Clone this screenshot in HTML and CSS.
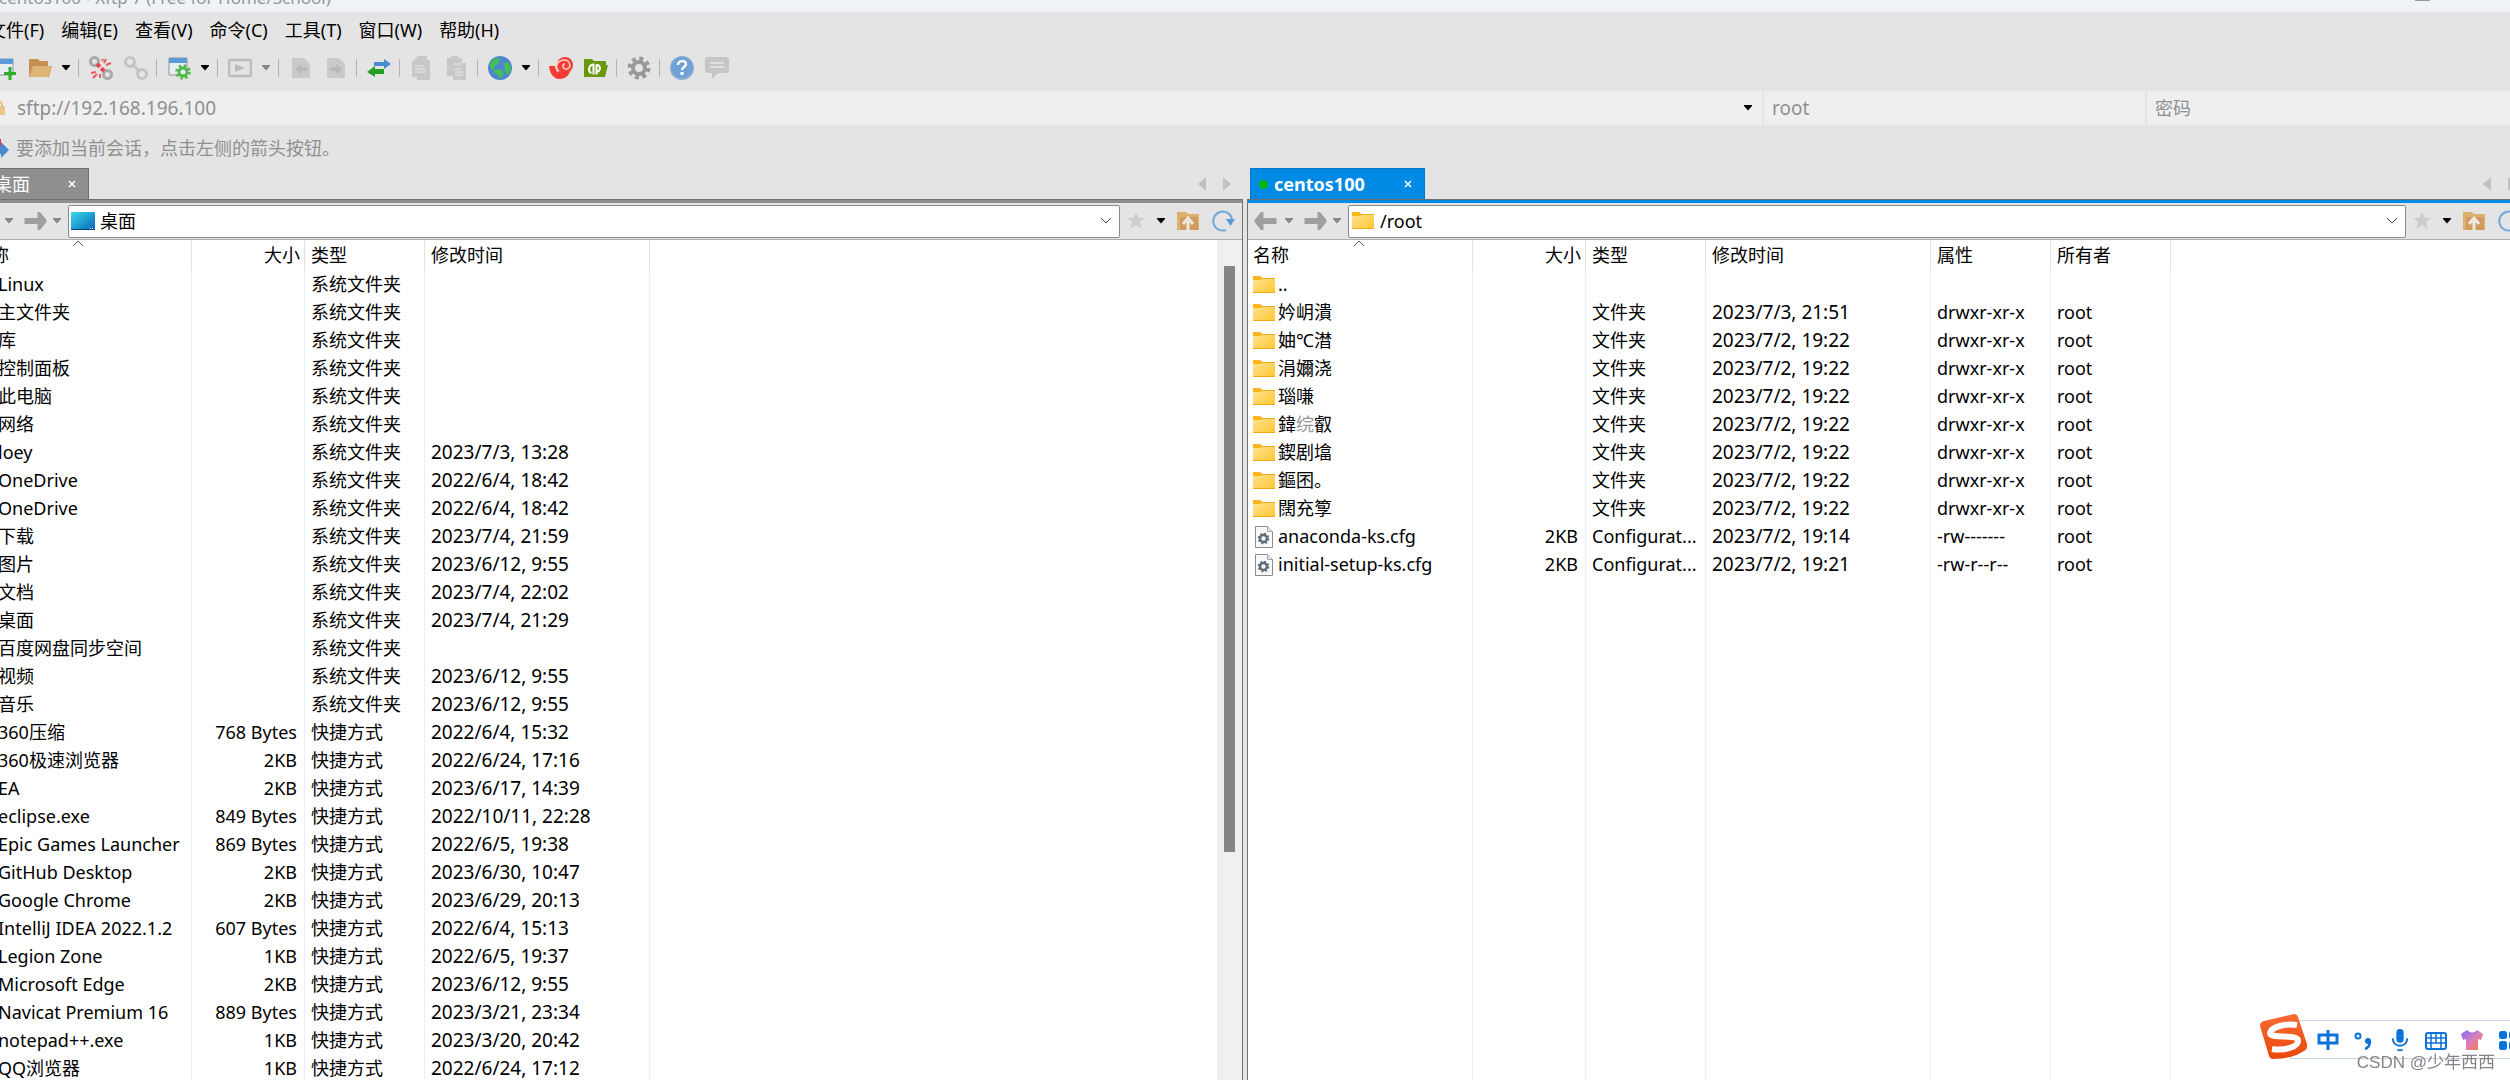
FILE: index.html
```html
<!DOCTYPE html>
<html lang="zh-CN">
<head>
<meta charset="utf-8">
<title>centos100 - Xftp 7</title>
<link rel="stylesheet" href="styles.css">
</head>
<body>
<svg class="defs" aria-hidden="true">
  <defs>
    <linearGradient id="g-folder" x1="0" y1="0" x2="1" y2="1"><stop offset="0" stop-color="#ffe494"/><stop offset="1" stop-color="#ffc630"/></linearGradient>
    <linearGradient id="g-desk" x1="0" y1="0" x2="1" y2="1"><stop offset="0" stop-color="#35dbe8"/><stop offset="1" stop-color="#0a63bd"/></linearGradient>
    <linearGradient id="g-shirt" x1="0" y1="0" x2="1" y2="1"><stop offset="0" stop-color="#7b6cff"/><stop offset=".5" stop-color="#d97fb8"/><stop offset="1" stop-color="#ff7a3c"/></linearGradient>
    <linearGradient id="g-sogou" x1="0" y1="0" x2="0" y2="1"><stop offset="0" stop-color="#fa6b35"/><stop offset="1" stop-color="#ea4708"/></linearGradient>
    <symbol id="i-folder" viewBox="0 0 22 18"><path d="M0 2h22v15H0z" fill="url(#g-folder)"/><path d="M0 0h7l2 1.500V3L7 4H0z" fill="#fbb714"/><path d="M8 2.500h14M0 16.500h22" stroke="#efa91c" fill="none"/></symbol>
    <symbol id="i-cfg" viewBox="0 0 18 22"><path d="M.5.5h12l5 5v16H.5z" fill="#f8f8f8" stroke="#8c8c8c"/><path d="M12.500.5v5h5" fill="#e6e6e6" stroke="#a5a5a5"/><circle cx="8.500" cy="12.500" r="3.500" fill="none" stroke="#5d6c76" stroke-width="2.500"/><circle cx="8.500" cy="12.500" r="5" fill="none" stroke="#5d6c76" stroke-width="1.500" stroke-dasharray="2 1.930"/></symbol>
    <symbol id="i-desk" viewBox="0 0 24 18"><rect width="24" height="18" rx="1" fill="url(#g-desk)"/><path d="M0 17.500h24" stroke="#0c3f7c"/><path d="M19 16.500h4" stroke="#fff" stroke-dasharray="1 1"/></symbol>
    <symbol id="i-caret" viewBox="0 0 8 6"><path d="M0 0h8v1L4 5.500 0 1z" fill="currentColor"/></symbol>
    <symbol id="i-left" viewBox="0 0 22 18"><path d="M9 0H6.500L0 8v2l6.500 8H9v-6h13V6H9z" fill="#9f9f9f"/></symbol>
    <symbol id="i-right" viewBox="0 0 22 18"><path d="M13 0h2.500L22 8v2l-6.500 8H13v-6H0V6h13z" fill="#9f9f9f"/></symbol>
    <symbol id="i-down" viewBox="0 0 12 8"><path d="M1 1l5 5 5-5" fill="none" stroke="#444"/></symbol>
    <symbol id="i-sort" viewBox="0 0 12 8"><path d="M1 6l5-5 5 5" fill="none" stroke="#555"/></symbol>
    <symbol id="i-star" viewBox="0 0 20 20"><path d="M10 0l3 6.500h7l-5.500 4.500 2 8-6.500-4.500L3.500 19l2-8L0 6.500h7z" fill="#cdcdcd" stroke="#ececec" stroke-width=".6"/></symbol>
    <symbol id="i-up" viewBox="0 0 22 20"><path d="M0 1h9l2 2h11v16H0z" fill="#dcb06d"/><path d="M3 6h18v13H3z" fill="#d09b60"/><path d="M11 21v-11M6 13l5-6 5 6" fill="none" stroke="#efe9e2" stroke-width="3"/></symbol>
    <symbol id="i-refresh" viewBox="0 0 24 22"><path d="M20 9A9.500 9.500 0 1 0 14 20" fill="none" stroke="#6fa9db" stroke-width="2"/><path d="M14 9h9l-4.500 7z" fill="#5c9bd6"/></symbol>
    <symbol id="i-close" viewBox="0 0 8 8"><path d="M1 1l6 6M7 1L1 7" stroke="#fff" stroke-width="1.500"/></symbol>
    <symbol id="i-tri" viewBox="0 0 8 14"><path d="M8 0v14L0 7z" fill="#c1c1c1"/></symbol>
    <symbol id="i-new" viewBox="0 0 24 24"><path d="M3 3h17v16H3z" fill="#e9eef2" stroke="#8c969e"/><path d="M3 3h17v5H3z" fill="#5b9bd8"/><path d="M17 11v13M11 17.500h12" stroke="#2dae2a" stroke-width="3"/></symbol>
    <symbol id="i-open" viewBox="0 0 24 24"><path d="M1 3h9l2 2h8v5h4l-3 11H1z" fill="#c98f51"/><path d="M5 10h19l-4 11H1z" fill="#deb577"/></symbol>
    <symbol id="i-chain" viewBox="0 0 24 24"><circle cx="6" cy="6" r="4.500"/><path d="M8 8l8 8"/><circle cx="18" cy="18" r="4.500"/></symbol>
    <symbol id="i-break" viewBox="0 0 24 24"><g fill="none" stroke="#a9a9a9" stroke-width="3"><circle cx="5.500" cy="5.500" r="4"/><circle cx="18.500" cy="18.500" r="4"/></g><path d="M8 8l8 8" stroke="#e84550" stroke-width="4" stroke-dasharray="4 2"/><path d="M15 7l2-4M17 9l5-2M13 5l1-2M7 16l-5 1M8 18l-4 4M11 18v4" stroke="#ea5a62" stroke-width="2"/></symbol>
    <symbol id="i-prop" viewBox="0 0 24 24"><path d="M2 2h18v17H2z" fill="#e9eef2" stroke="#8c969e"/><path d="M2 2h18v5H2z" fill="#5b9bd8"/><circle cx="16" cy="16" r="4" fill="none" stroke="#53b84b" stroke-width="3"/><circle cx="16" cy="16" r="6.500" fill="none" stroke="#53b84b" stroke-width="2.500" stroke-dasharray="2.500 2.600"/></symbol>
    <symbol id="i-play" viewBox="0 0 24 24"><rect x="1" y="4" width="22" height="16" rx="1" fill="none" stroke="#bdbdbd" stroke-width="2.500"/><path d="M7 8l10 4-10 4z" fill="#bdbdbd"/></symbol>
    <symbol id="i-docl" viewBox="0 0 24 24"><path d="M3 2h12l6 6v14H3z" fill="#cacaca"/><path d="M6 13l6-5v3h6v4h-6v3z" fill="#b9b9b9"/></symbol>
    <symbol id="i-docr" viewBox="0 0 24 24"><path d="M3 2h12l6 6v14H3z" fill="#cacaca"/><path d="M18 13l-6-5v3H6v4h6v3z" fill="#b9b9b9"/></symbol>
    <symbol id="i-swap" viewBox="0 0 24 24"><path d="M7 6h10V3l7 5-7 5v-3H7z" fill="#4a8bce"/><path d="M17 13H8v-3l-8 6 8 5v-3h9z" fill="#23a021"/></symbol>
    <symbol id="i-copy" viewBox="0 0 24 24"><path d="M8 0h9v4h3v20H7v-3H2V6z" fill="#c8c8c8"/><path d="M5 10h8M5 13h11M5 16h11" stroke="#dedede" stroke-width="1.500"/></symbol>
    <symbol id="i-paste" viewBox="0 0 24 24"><path d="M2 2h4V0h7v2h4v5h4v17H8v-4H2z" fill="#c8c8c8"/><path d="M8 8h8M10 13h6M10 16h8M10 19h8" stroke="#dedede" stroke-width="1.500"/></symbol>
    <symbol id="i-globe" viewBox="0 0 24 24"><circle cx="12" cy="12" r="12" fill="#4b87cf"/><path d="M2 7l5-5 5 1-2 5-4 3 1 4-5-3zM9 13l5 1 2 4-4 5-2-4-5-3zM16 6l5 1 2 5-1 5-3 2-2-5-1-4z" fill="#46bd52"/></symbol>
    <symbol id="i-swirl" viewBox="0 0 24 24"><path d="M0 10h6c0 5 6 7 10 4 5 5 6-1 6-1-2 7-6 10-12 10C5 23 1 18 0 10z" fill="#f33b32"/><circle cx="16" cy="9" r="8" fill="#f33b32"/><path d="M9 16c-4-5 0-12 6-12 6 0 8 7 3 9-4 1-6-5-2-5" fill="none" stroke="#ffd0cb" stroke-width="1.500"/></symbol>
    <symbol id="i-pf" viewBox="0 0 24 24"><path d="M0 3h8l2 2h12v4h2l-3 12H0z" fill="#6a980c"/><path d="M9.500 18.500V8.500C4 9 4 16 7.500 17M12.500 8.500v10M12.500 9c4-1 5 7 0 7" fill="none" stroke="#fff" stroke-width="2"/></symbol>
    <symbol id="i-gear" viewBox="0 0 24 24"><circle cx="12" cy="12" r="6" fill="none" stroke="#999" stroke-width="4"/><circle cx="12" cy="12" r="9.500" fill="none" stroke="#999" stroke-width="4" stroke-dasharray="4 3.460"/></symbol>
    <symbol id="i-help" viewBox="0 0 24 24"><circle cx="12" cy="12" r="12" fill="#8cabcf"/><circle cx="12" cy="11.500" r="10.500" fill="#6ea1d8"/><path d="M8 9c0-5 8-5 8-1 0 3-4 3-4 6" fill="none" stroke="#fff" stroke-width="2.500"/><path d="M10.500 16h3v3h-3z" fill="#fff"/></symbol>
    <symbol id="i-chat" viewBox="0 0 24 24"><path d="M2 1h20l2 2v12l-2 2H13l-6 6v-6H2l-2-2V3z" fill="#c6c6c6"/><path d="M5 7h14M5 11h14" stroke="#e0e0e0" stroke-width="2"/></symbol>
  </defs>
</svg>

<div class="window">
  <header class="titlebar"><span>centos100 - Xftp 7 (Free for Home/School)</span><i class="maximize"></i></header>

  <nav class="menu">
    <button>文件(F)</button><button>编辑(E)</button><button>查看(V)</button><button>命令(C)</button><button>工具(T)</button><button>窗口(W)</button><button>帮助(H)</button>
  </nav>

  <div class="toolbar">
    <button class="tool" aria-label="新建"><svg><use href="#i-new"/></svg></button>
    <button class="tool" aria-label="打开"><svg><use href="#i-open"/></svg></button>
    <button class="more" aria-label="更多"><svg><use href="#i-caret"/></svg></button>
    <i class="sep"></i>
    <button class="tool" aria-label="断开"><svg><use href="#i-break"/></svg></button>
    <button class="tool chain" aria-label="重新连接"><svg><use href="#i-chain"/></svg></button>
    <i class="sep"></i>
    <button class="tool" aria-label="属性"><svg><use href="#i-prop"/></svg></button>
    <button class="more" aria-label="更多"><svg><use href="#i-caret"/></svg></button>
    <i class="sep"></i>
    <button class="tool" aria-label="运行"><svg><use href="#i-play"/></svg></button>
    <button class="more dim" aria-label="更多"><svg><use href="#i-caret"/></svg></button>
    <i class="sep"></i>
    <button class="tool" aria-label="传输到左侧"><svg><use href="#i-docl"/></svg></button>
    <button class="tool" aria-label="传输到右侧"><svg><use href="#i-docr"/></svg></button>
    <i class="sep"></i>
    <button class="tool" aria-label="同步"><svg><use href="#i-swap"/></svg></button>
    <i class="sep"></i>
    <button class="tool" aria-label="复制"><svg><use href="#i-copy"/></svg></button>
    <button class="tool" aria-label="粘贴"><svg><use href="#i-paste"/></svg></button>
    <i class="sep"></i>
    <button class="tool" aria-label="语言"><svg><use href="#i-globe"/></svg></button>
    <button class="more" aria-label="更多"><svg><use href="#i-caret"/></svg></button>
    <i class="sep"></i>
    <button class="tool" aria-label="Xshell"><svg><use href="#i-swirl"/></svg></button>
    <button class="tool" aria-label="文件夹"><svg><use href="#i-pf"/></svg></button>
    <i class="sep"></i>
    <button class="tool" aria-label="选项"><svg><use href="#i-gear"/></svg></button>
    <i class="sep"></i>
    <button class="tool" aria-label="帮助"><svg><use href="#i-help"/></svg></button>
    <button class="tool" aria-label="反馈"><svg><use href="#i-chat"/></svg></button>
  </div>

  <form class="address">
    <div class="host">
      <svg class="lock" viewBox="0 0 14 14"><path d="M3 6V4a4 4 0 0 1 8 0v2" fill="none" stroke="#e8bd84" stroke-width="2"/><path d="M0 5h14v9H0z" fill="#ecc48e"/><path d="M7 8v3" stroke="#f7e4c8" stroke-width="2"/></svg>
      <input aria-label="主机" value="sftp://192.168.196.100">
      <button type="button" class="more" aria-label="历史"><svg><use href="#i-caret"/></svg></button>
    </div>
    <input class="user" aria-label="用户名" value="root">
    <input class="pass" aria-label="密码" placeholder="密码">
  </form>

  <div class="hint">
    <svg viewBox="0 0 20 20"><path d="M4 1h8v10H4z" fill="#e23b3b"/><path d="M6 8h6V4l8 8-8 8v-4H6z" fill="#4a8bd0"/></svg>
    要添加当前会话，点击左侧的箭头按钮。
  </div>

  <main class="panes">
    <section class="pane local">
      <div class="tabs">
        <div class="tab"><span>桌面</span><button aria-label="关闭"><svg><use href="#i-close"/></svg></button></div>
        <div class="pager"><svg><use href="#i-tri"/></svg><svg class="flip"><use href="#i-tri"/></svg></div>
      </div>
      <div class="body">
        <div class="nav">
          <button class="go" aria-label="后退"><svg><use href="#i-left"/></svg></button>
          <button class="more dim" aria-label="更多"><svg><use href="#i-caret"/></svg></button>
          <button class="go" aria-label="前进"><svg><use href="#i-right"/></svg></button>
          <button class="more dim" aria-label="更多"><svg><use href="#i-caret"/></svg></button>
          <label class="path"><svg class="place"><use href="#i-desk"/></svg><input aria-label="本地路径" value="桌面"><svg class="drop"><use href="#i-down"/></svg></label>
          <button class="act star" aria-label="书签"><svg><use href="#i-star"/></svg></button>
          <button class="more" aria-label="更多"><svg><use href="#i-caret"/></svg></button>
          <button class="act up" aria-label="上级"><svg><use href="#i-up"/></svg></button>
          <button class="act" aria-label="刷新"><svg><use href="#i-refresh"/></svg></button>
        </div>
        <div class="list">
          <table>
            <colgroup><col class="c-name"><col class="c-size"><col class="c-type"><col class="c-date"><col></colgroup>
            <thead><tr><th>名称<svg class="sort"><use href="#i-sort"/></svg></th><th>大小</th><th>类型</th><th>修改时间</th><th></th></tr></thead>
            <tbody>
              <tr><td>Linux</td><td></td><td>系统文件夹</td><td></td><td></td></tr>
              <tr><td>主文件夹</td><td></td><td>系统文件夹</td><td></td><td></td></tr>
              <tr><td>库</td><td></td><td>系统文件夹</td><td></td><td></td></tr>
              <tr><td>控制面板</td><td></td><td>系统文件夹</td><td></td><td></td></tr>
              <tr><td>此电脑</td><td></td><td>系统文件夹</td><td></td><td></td></tr>
              <tr><td>网络</td><td></td><td>系统文件夹</td><td></td><td></td></tr>
              <tr><td>loey</td><td></td><td>系统文件夹</td><td>2023/7/3, 13:28</td><td></td></tr>
              <tr><td>OneDrive</td><td></td><td>系统文件夹</td><td>2022/6/4, 18:42</td><td></td></tr>
              <tr><td>OneDrive</td><td></td><td>系统文件夹</td><td>2022/6/4, 18:42</td><td></td></tr>
              <tr><td>下载</td><td></td><td>系统文件夹</td><td>2023/7/4, 21:59</td><td></td></tr>
              <tr><td>图片</td><td></td><td>系统文件夹</td><td>2023/6/12, 9:55</td><td></td></tr>
              <tr><td>文档</td><td></td><td>系统文件夹</td><td>2023/7/4, 22:02</td><td></td></tr>
              <tr><td>桌面</td><td></td><td>系统文件夹</td><td>2023/7/4, 21:29</td><td></td></tr>
              <tr><td>百度网盘同步空间</td><td></td><td>系统文件夹</td><td></td><td></td></tr>
              <tr><td>视频</td><td></td><td>系统文件夹</td><td>2023/6/12, 9:55</td><td></td></tr>
              <tr><td>音乐</td><td></td><td>系统文件夹</td><td>2023/6/12, 9:55</td><td></td></tr>
              <tr><td>360压缩</td><td>768 Bytes</td><td>快捷方式</td><td>2022/6/4, 15:32</td><td></td></tr>
              <tr><td>360极速浏览器</td><td>2KB</td><td>快捷方式</td><td>2022/6/24, 17:16</td><td></td></tr>
              <tr><td>EA</td><td>2KB</td><td>快捷方式</td><td>2023/6/17, 14:39</td><td></td></tr>
              <tr><td>eclipse.exe</td><td>849 Bytes</td><td>快捷方式</td><td>2022/10/11, 22:28</td><td></td></tr>
              <tr><td>Epic Games Launcher</td><td>869 Bytes</td><td>快捷方式</td><td>2022/6/5, 19:38</td><td></td></tr>
              <tr><td>GitHub Desktop</td><td>2KB</td><td>快捷方式</td><td>2023/6/30, 10:47</td><td></td></tr>
              <tr><td>Google Chrome</td><td>2KB</td><td>快捷方式</td><td>2023/6/29, 20:13</td><td></td></tr>
              <tr><td>IntelliJ IDEA 2022.1.2</td><td>607 Bytes</td><td>快捷方式</td><td>2022/6/4, 15:13</td><td></td></tr>
              <tr><td>Legion Zone</td><td>1KB</td><td>快捷方式</td><td>2022/6/5, 19:37</td><td></td></tr>
              <tr><td>Microsoft Edge</td><td>2KB</td><td>快捷方式</td><td>2023/6/12, 9:55</td><td></td></tr>
              <tr><td>Navicat Premium 16</td><td>889 Bytes</td><td>快捷方式</td><td>2023/3/21, 23:34</td><td></td></tr>
              <tr><td>notepad++.exe</td><td>1KB</td><td>快捷方式</td><td>2023/3/20, 20:42</td><td></td></tr>
              <tr><td>QQ浏览器</td><td>1KB</td><td>快捷方式</td><td>2022/6/24, 17:12</td><td></td></tr>
            </tbody>
          </table>
          <div class="scroll"><div class="thumb"></div></div>
        </div>
      </div>
    </section>

    <section class="pane remote">
      <div class="tabs">
        <div class="tab"><i class="dot"></i><span>centos100</span><button aria-label="关闭"><svg><use href="#i-close"/></svg></button></div>
        <div class="pager"><svg><use href="#i-tri"/></svg><svg class="flip"><use href="#i-tri"/></svg></div>
      </div>
      <div class="body">
        <div class="nav">
          <button class="go" aria-label="后退"><svg><use href="#i-left"/></svg></button>
          <button class="more dim" aria-label="更多"><svg><use href="#i-caret"/></svg></button>
          <button class="go" aria-label="前进"><svg><use href="#i-right"/></svg></button>
          <button class="more dim" aria-label="更多"><svg><use href="#i-caret"/></svg></button>
          <label class="path"><svg class="place"><use href="#i-folder"/></svg><input aria-label="远程路径" value="/root"><svg class="drop"><use href="#i-down"/></svg></label>
          <button class="act star" aria-label="书签"><svg><use href="#i-star"/></svg></button>
          <button class="more" aria-label="更多"><svg><use href="#i-caret"/></svg></button>
          <button class="act up" aria-label="上级"><svg><use href="#i-up"/></svg></button>
          <button class="act" aria-label="刷新"><svg><use href="#i-refresh"/></svg></button>
        </div>
        <div class="list">
          <table>
            <colgroup><col class="c-name"><col class="c-size"><col class="c-type"><col class="c-date"><col class="c-type"><col class="c-type"><col></colgroup>
            <thead><tr><th>名称<svg class="sort"><use href="#i-sort"/></svg></th><th>大小</th><th>类型</th><th>修改时间</th><th>属性</th><th>所有者</th><th></th></tr></thead>
            <tbody>
              <tr><td><svg class="file"><use href="#i-folder"/></svg>..</td><td></td><td></td><td></td><td></td><td></td><td></td></tr>
              <tr><td><svg class="file"><use href="#i-folder"/></svg>妗岄潰</td><td></td><td>文件夹</td><td>2023/7/3, 21:51</td><td>drwxr-xr-x</td><td>root</td><td></td></tr>
              <tr><td><svg class="file"><use href="#i-folder"/></svg>妯℃澘</td><td></td><td>文件夹</td><td>2023/7/2, 19:22</td><td>drwxr-xr-x</td><td>root</td><td></td></tr>
              <tr><td><svg class="file"><use href="#i-folder"/></svg>涓嬭浇</td><td></td><td>文件夹</td><td>2023/7/2, 19:22</td><td>drwxr-xr-x</td><td>root</td><td></td></tr>
              <tr><td><svg class="file"><use href="#i-folder"/></svg>瑙嗛</td><td></td><td>文件夹</td><td>2023/7/2, 19:22</td><td>drwxr-xr-x</td><td>root</td><td></td></tr>
              <tr><td><svg class="file"><use href="#i-folder"/></svg>鍏<span class="faint">𬘫</span>叡</td><td></td><td>文件夹</td><td>2023/7/2, 19:22</td><td>drwxr-xr-x</td><td>root</td><td></td></tr>
              <tr><td><svg class="file"><use href="#i-folder"/></svg>鍥剧墖</td><td></td><td>文件夹</td><td>2023/7/2, 19:22</td><td>drwxr-xr-x</td><td>root</td><td></td></tr>
              <tr><td><svg class="file"><use href="#i-folder"/></svg>鏂囨。</td><td></td><td>文件夹</td><td>2023/7/2, 19:22</td><td>drwxr-xr-x</td><td>root</td><td></td></tr>
              <tr><td><svg class="file"><use href="#i-folder"/></svg>闊充箰</td><td></td><td>文件夹</td><td>2023/7/2, 19:22</td><td>drwxr-xr-x</td><td>root</td><td></td></tr>
              <tr><td><svg class="file"><use href="#i-cfg"/></svg>anaconda-ks.cfg</td><td>2KB</td><td>Configurat...</td><td>2023/7/2, 19:14</td><td>-rw-------</td><td>root</td><td></td></tr>
              <tr><td><svg class="file"><use href="#i-cfg"/></svg>initial-setup-ks.cfg</td><td>2KB</td><td>Configurat...</td><td>2023/7/2, 19:21</td><td>-rw-r--r--</td><td>root</td><td></td></tr>
              <tr class="rest"><td></td><td></td><td></td><td></td><td></td><td></td><td></td></tr>
            </tbody>
          </table>
        </div>
      </div>
    </section>
  </main>
</div>

<aside class="ime">
  <div class="ime-bar">
    <svg viewBox="0 0 22 22"><path d="M2 6h18v8H2zM11 1v20" fill="none" stroke="#0b72da" stroke-width="3"/></svg>
    <svg viewBox="0 0 22 22"><circle cx="5" cy="7" r="2.500" fill="none" stroke="#0b72da" stroke-width="2"/><circle cx="15" cy="12" r="3" fill="#0b72da"/><path d="M17 12q0 6-5 8" fill="none" stroke="#0b72da" stroke-width="2.500"/></svg>
    <svg viewBox="0 0 22 24"><rect x="7" y="0" width="8" height="15" rx="4" fill="#0b72da"/><path d="M3 10c0 11 16 11 16 0M8 23h6" fill="none" stroke="#0b72da" stroke-width="2"/></svg>
    <svg viewBox="0 0 22 22"><rect x="1" y="4" width="20" height="16" rx="2" fill="none" stroke="#0b72da" stroke-width="2"/><path d="M1 9h20M1 14h20M6 4v16M11 4v10M16 4v16" stroke="#0b72da" stroke-width="1.500"/></svg>
    <svg viewBox="0 0 22 22"><path d="M6 1q5 5 10 0l6 4-2 6-3-1v11H5V10l-3 1-2-6z" fill="url(#g-shirt)"/></svg>
    <svg viewBox="0 0 22 22"><rect x="2" y="2" width="8" height="8" rx="2.500" fill="#0b72da"/><rect x="2" y="12" width="8" height="9" rx="2.500" fill="#0b72da"/><rect x="12" y="2" width="8" height="8" rx="2.500" fill="#0b72da"/><rect x="12" y="12" width="8" height="9" rx="2.500" fill="#0b72da"/></svg>
  </div>
  <svg class="sogou" viewBox="0 0 48 46"><path d="M4 7L34 0q3 0 4 3l9 27q1 5-3 7-12 8-31 8-3 0-4-3L0 12q0-4 4-5z" fill="url(#g-sogou)"/><path d="M37 11C26 9 11 13 10 19c0 6 26 1 28 7 1 7-14 11-26 9" fill="none" stroke="#fff" stroke-width="6"/></svg>
  <p class="mark">CSDN @少年西西</p>
</aside>
</body>
</html>
```
FILE: styles.css
```css
* { box-sizing: border-box; }
body {
  margin: 0;
  overflow: hidden;
  background: #e4e4e4;
  color: #000;
  font: 18px/28px "Noto Sans", "Noto Sans CJK SC", sans-serif;
}
button, input {
  margin: 0;
  padding: 0;
  border: 0;
  background: none;
  color: inherit;
  font: inherit;
  outline: 0;
}
input { min-width: 0; }
svg { display: block; flex: none; }
.defs { position: absolute; width: 0; height: 0; }

/* The window is wider than the screen on both sides */
.window {
  display: flex;
  flex-direction: column;
  height: 100vh;
  margin: 0 -18px 0 -33px;
}
.titlebar {
  display: flex;
  justify-content: space-between;
  align-items: flex-end;
  flex: none;
  height: 12px;
  padding: 0 98px 0 32px;
  overflow: hidden;
  background: #eff3f7;
  color: #969696;
  font-size: 17px;
}
.maximize { align-self: flex-start; width: 15px; height: 1px; background: #999; }

.menu { display: flex; flex: none; gap: 17px; height: 36px; padding-left: 21px; align-items: center; }

.toolbar { display: flex; flex: none; align-items: center; height: 43px; padding: 0 0 3px 20px; }
.tool, .more, .go, .act { display: flex; flex: none; align-items: center; justify-content: center; }
.tool { width: 35px; }
.tool svg { width: 24px; height: 24px; }
.chain { fill: none; stroke: #c4c4c4; stroke-width: 3px; }
.more { width: 18px; color: #000; }
.more svg { width: 8px; height: 6px; }
.dim { color: #868686; }
.sep { width: 8px; height: 18px; background: linear-gradient(#b4b4b4, #b4b4b4) 3px 0 / 1px 100% no-repeat; }

.address { display: flex; flex: none; gap: 2px; height: 34px; color: #909090; font-size: 19px; }
.address input::placeholder { color: #909090; font-size: 18px; opacity: 1; }
.host { display: flex; flex: 1; align-items: center; padding: 0 5px 0 24px; background: #efefef; }
.host input { flex: 1; padding-left: 12px; }
.lock { width: 14px; height: 14px; }
.user, .pass { width: 381px; padding-left: 8px; background: #efefef; }

.hint { display: flex; flex: none; align-items: center; gap: 7px; height: 43px; padding: 2px 0 0 22px; color: #909090; }
.hint svg { width: 20px; height: 20px; }

.panes { display: grid; grid-template-columns: 1276fr 1281fr; gap: 4px; flex: 1; min-height: 0; }
.pane { display: flex; flex-direction: column; min-width: 0; min-height: 0; }
.tabs { display: flex; flex: none; justify-content: space-between; height: 31px; padding-left: 3px; }
.tab { display: flex; align-items: center; padding: 0 12px 0 8px; border: solid #707070; border-width: 1px 1px 0; background: #8f8f8f; color: #fff; }
.tab button { width: 8px; }
.tab svg { width: 8px; height: 8px; }
.local .tab { width: 119px; justify-content: space-between; padding-left: 23px; }
.remote .tab { width: 175px; border-color: #0078c8; background: #008ae4; font-weight: 700; }
.remote .tab button { margin-left: auto; }
.dot { width: 9px; height: 9px; margin-right: 6px; border-radius: 50%; background: #00b80c; }
.pager { display: flex; align-items: center; gap: 17px; padding-right: 12px; }
.pager svg { width: 8px; height: 14px; }
.flip { transform: rotate(180deg); }
.body { display: flex; flex: 1; flex-direction: column; min-height: 0; border-top: 1px solid #707070; }
.local .body { border-right: 1px solid #707070; }
.remote .body { border-left: 1px solid #707070; }

.nav { display: flex; flex: none; align-items: center; height: 40px; padding: 0 0 0 5px; border-top: 3px solid #8f8f8f; border-bottom: 1px solid #adadad; }
.local .nav { padding-left: 6px; }
.remote .nav { border-top-color: #008ae4; }
.go { width: 24px; }
.go svg { width: 23px; height: 18px; }
.nav .dim { width: 24px; color: #868686; }
.nav .dim + .go { margin-left: 2px; }
.go + .dim + .go + .dim { width: 20px; margin-right: 1px; }
.path { display: flex; flex: 1; align-items: center; height: 33px; min-width: 0; padding: 0 7px 0 2px; border: 1px solid #8a8a8a; border-radius: 2px; background: #fff; }
.path input { flex: 1; padding-left: 5px; }
.place { width: 24px; height: 18px; }
.drop { width: 12px; height: 8px; }
.act { width: 36px; }
.act svg { width: 24px; height: 22px; }
.star svg { width: 20px; height: 20px; }
.up svg { width: 22px; height: 20px; }
.nav .star { width: 32px; }

.list { display: flex; flex: 1; min-height: 0; overflow: hidden; background: #fff; }
table { flex: 1; height: 100%; table-layout: fixed; border-collapse: separate; border-spacing: 0; }
.c-name { width: 225px; }
.c-size { width: 113px; }
.c-type { width: 120px; }
.c-date { width: 225px; }
th, td { height: 28px; padding: 0 0 0 6px; border-right: 1px solid #e5f0fb; font-weight: 400; line-height: 28px; text-align: left; white-space: nowrap; }
th { position: relative; height: 30px; border-color: #e0e0e0; line-height: 30px; }
td:last-child, th:last-child { border: 0; }
td:nth-child(2) { padding-right: 7px; text-align: right; }
th:nth-child(2) { padding-right: 4px; text-align: right; }
td:nth-child(4) { font-size: 19px; }
.local td:first-child { padding-left: 31px; }
.remote td:first-child, .remote th:first-child { padding-left: 5px; }
.rest td { height: auto; }
.sort { position: absolute; top: 0; left: 47%; width: 12px; height: 8px; }
.file { display: inline-block; width: 22px; height: 22px; margin-right: 3px; vertical-align: -5px; }
.faint { color: #999; }

.scroll { flex: none; width: 25px; padding: 26px 7px 0; background: #f0f0f0; }
.thumb { height: 72%; background: #858585; }

/* Input-method bar floating over the desktop */
.ime { position: fixed; right: -16px; bottom: 0; width: 266px; height: 66px; }
.ime-bar { position: absolute; top: 6px; right: 0; left: 30px; display: flex; align-items: center; gap: 14px; height: 39px; padding-left: 26px; border: 1px solid #c3d4e8; background: #fff; }
.ime-bar svg { width: 22px; height: 22px; }
.sogou { position: absolute; top: 0; left: 0; width: 48px; height: 46px; }
.mark { position: absolute; right: 31px; bottom: 3px; margin: 0; color: #858585; font: 17px/28px "Liberation Sans", "Noto Sans CJK SC", sans-serif; white-space: nowrap; }
```
